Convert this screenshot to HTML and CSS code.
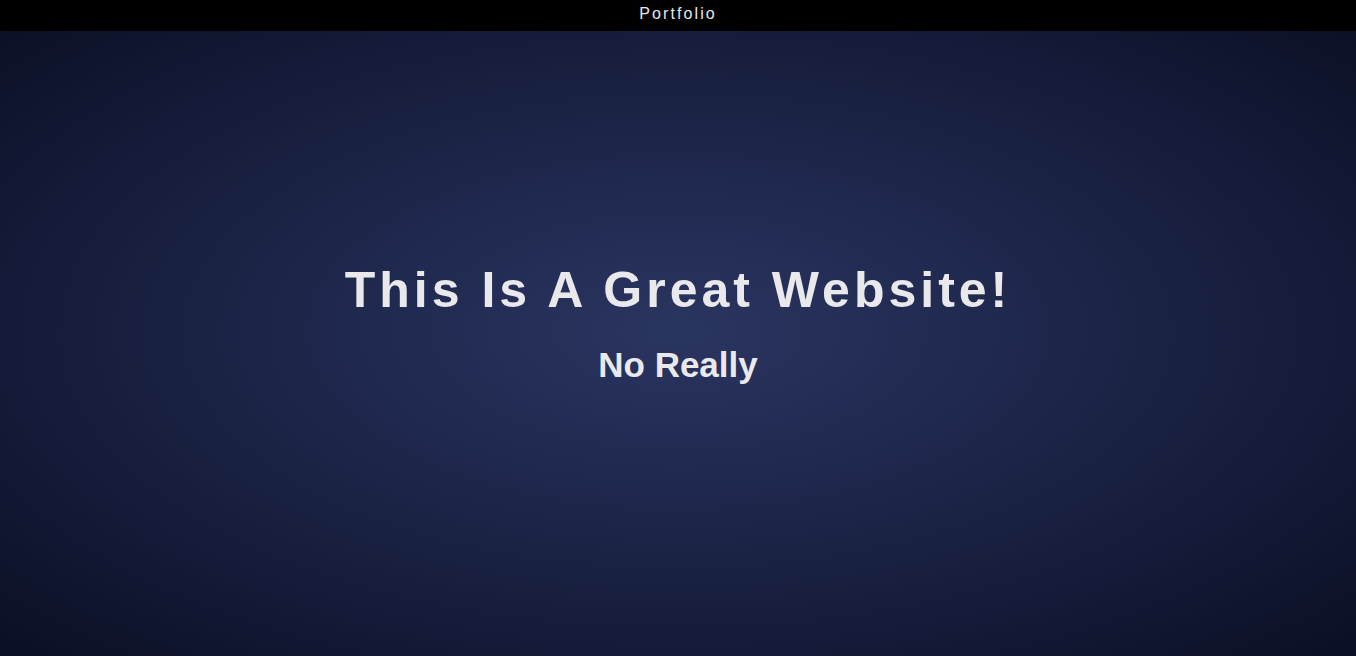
FILE: index.html
```html
<!DOCTYPE html>
<html>
<head>
<meta charset="utf-8">
<title>Portfolio</title>
<link rel="stylesheet" href="styles.css">
</head>
<body>
<header class="topbar">Portfolio</header>
<main class="hero">
  <h1 class="hero-title">This Is A Great Website!</h1>
  <h2 class="hero-sub">No Really</h2>
</main>
</body>
</html>
```
FILE: styles.css
```css
html, body {
  margin: 0;
  padding: 0;
  height: 100%;
}
body {
  font-family: "Liberation Sans", Arial, sans-serif;
  background: #000;
  display: flex;
  flex-direction: column;
  overflow: hidden;
}
.topbar {
  height: 31px;
  flex: 0 0 31px;
  background: #000;
  color: #e8e8ee;
  font-size: 16px;
  letter-spacing: 2.1px;
  text-align: center;
  line-height: 27px;
}
.hero {
  flex: 1;
  display: flex;
  flex-direction: column;
  align-items: center;
  justify-content: center;
  background: radial-gradient(ellipse at 50% 48%, #2a3561 0%, #1c2447 45%, #0b0f25 100%);
  color: #e9e9ec;
  padding-bottom: 40px;
}
.hero-title {
  margin: 0;
  font-size: 50px;
  font-weight: bold;
  letter-spacing: 4px;
  line-height: 1.15;
}
.hero-sub {
  margin: 25px 0 0;
  font-size: 35px;
  font-weight: bold;
  line-height: 1.15;
}
```
